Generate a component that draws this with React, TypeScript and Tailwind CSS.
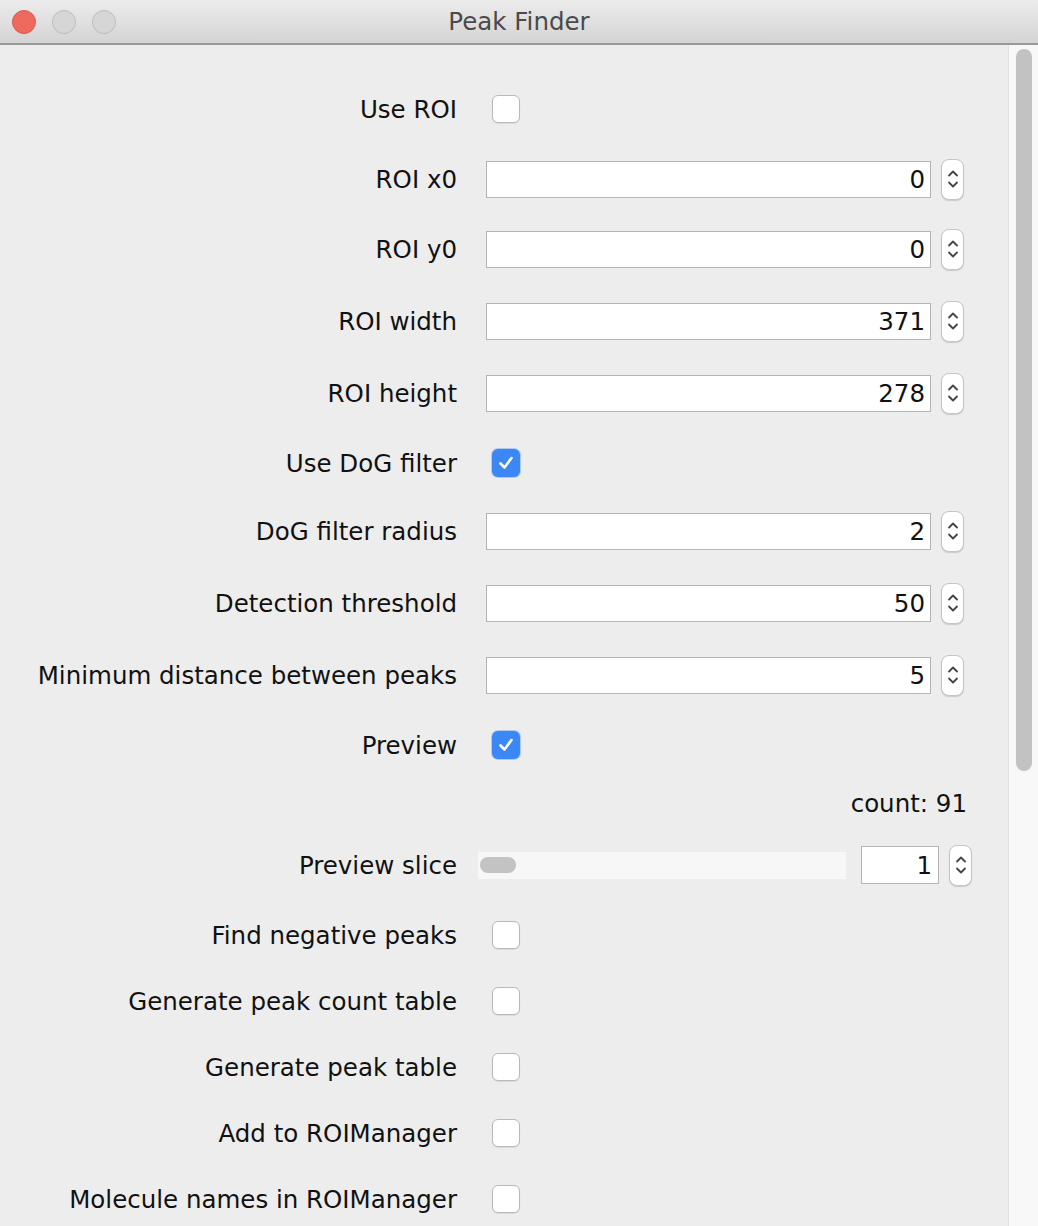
import React from "react";

const font = { fontFamily: '"DejaVu Sans", "Liberation Sans", sans-serif' };

function Spinner() {
  return (
    <div className="ml-[10px] flex h-[41px] w-[23px] flex-col items-center justify-center gap-[4px] rounded-[8px] border border-[#c4c4c4] bg-white shadow-[0_1px_1px_rgba(0,0,0,0.15)]">
      <svg width="12" height="8" viewBox="0 0 12 8"><path d="M2 6.5 L6 2.5 L10 6.5" fill="none" stroke="#444" strokeWidth="1.8" strokeLinecap="round" strokeLinejoin="round" /></svg>
      <svg width="12" height="8" viewBox="0 0 12 8"><path d="M2 1.5 L6 5.5 L10 1.5" fill="none" stroke="#444" strokeWidth="1.8" strokeLinecap="round" strokeLinejoin="round" /></svg>
    </div>
  );
}

function Check({ on }: { on?: boolean }) {
  if (on)
    return (
      <div className="ml-[35px] flex h-[28px] w-[28px] items-center justify-center rounded-[6px] bg-[#3b87f5] shadow-[0_0_0_1px_rgba(59,135,245,0.35)]">
        <svg width="18" height="16" viewBox="0 0 18 16"><path d="M3.5 8.5 L7.5 12.5 L14.5 3" fill="none" stroke="#fff" strokeWidth="2.6" strokeLinecap="round" strokeLinejoin="round" /></svg>
      </div>
    );
  return <div className="ml-[35px] h-[28px] w-[28px] rounded-[6px] border border-[#b9b9b9] bg-white shadow-[0_1px_1px_rgba(0,0,0,0.08)]" />;
}

function Field({ v }: { v: string }) {
  return (
    <div className="ml-[29px] flex items-center">
      <div className="flex h-[37px] w-[445px] items-center justify-end border border-[#b5b5b5] bg-white pr-[5px] pt-[2px] text-[24.5px] text-[#111]">{v}</div>
      <Spinner />
    </div>
  );
}

function Row({ label, mt, children }: { label: string; mt: string; children: React.ReactNode }) {
  return (
    <div className={`flex h-[40px] items-center ${mt}`}>
      <div className="w-[457px] whitespace-nowrap pt-[3px] text-right text-[24.5px] text-[#111]">{label}</div>
      {children}
    </div>
  );
}

export default function App() {
  return (
    <div className="flex h-[1226px] w-[1038px] flex-col overflow-hidden bg-[#ededed]" style={font}>
      <div className="relative flex h-[45px] shrink-0 items-center border-b-[2px] border-[#9a9a9a] bg-gradient-to-b from-[#ececec] to-[#d4d4d4]">
        <div className="ml-[12px] flex gap-[16px]">
          <div className="h-[24px] w-[24px] rounded-full border border-[#d9574c] bg-[#ee6a5e]" />
          <div className="h-[24px] w-[24px] rounded-full border border-[#bdbdbd] bg-[#d6d6d6]" />
          <div className="h-[24px] w-[24px] rounded-full border border-[#bdbdbd] bg-[#d6d6d6]" />
        </div>
        <div className="absolute inset-x-0 top-[1px] flex h-[43px] items-center justify-center text-[24.5px] text-[#4a4a4a]">Peak Finder</div>
      </div>
      <div className="flex flex-1">
        <div className="flex flex-1 flex-col pt-[44px]">
          <Row label="Use ROI" mt="mt-0"><Check /></Row>
          <Row label="ROI x0" mt="mt-[30px]"><Field v="0" /></Row>
          <Row label="ROI y0" mt="mt-[30px]"><Field v="0" /></Row>
          <Row label="ROI width" mt="mt-[32px]"><Field v="371" /></Row>
          <Row label="ROI height" mt="mt-[32px]"><Field v="278" /></Row>
          <Row label="Use DoG filter" mt="mt-[30px]"><Check on /></Row>
          <Row label="DoG filter radius" mt="mt-[28px]"><Field v="2" /></Row>
          <Row label="Detection threshold" mt="mt-[32px]"><Field v="50" /></Row>
          <Row label="Minimum distance between peaks" mt="mt-[32px]"><Field v="5" /></Row>
          <Row label="Preview" mt="mt-[30px]"><Check on /></Row>
          <div className="mt-[18px] flex h-[40px] items-center justify-end pr-[41px] pt-[3px] text-[24.5px] text-[#111]">count: 91</div>
          <Row label="Preview slice" mt="mt-[22px]">
            <div className="ml-[21px] flex h-[27px] w-[368px] items-center bg-[#f7f7f7] pl-[2px]">
              <div className="h-[16px] w-[36px] rounded-full bg-[#c3c3c3]" />
            </div>
            <div className="ml-[15px] flex h-[38px] w-[78px] items-center justify-end border border-[#b5b5b5] bg-white pr-[6px] pt-[2px] text-[24.5px] text-[#111]">1</div>
            <Spinner />
          </Row>
          <Row label="Find negative peaks" mt="mt-[30px]"><Check /></Row>
          <Row label="Generate peak count table" mt="mt-[26px]"><Check /></Row>
          <Row label="Generate peak table" mt="mt-[26px]"><Check /></Row>
          <Row label="Add to ROIManager" mt="mt-[26px]"><Check /></Row>
          <Row label="Molecule names in ROIManager" mt="mt-[26px]"><Check /></Row>
        </div>
        <div className="w-[30px] border-l border-[#e2e2e2] bg-[#f8f8f8] pl-[7px] pt-[4px]">
          <div className="h-[722px] w-[16px] rounded-full bg-[#c2c2c2]" />
        </div>
      </div>
    </div>
  );
}
